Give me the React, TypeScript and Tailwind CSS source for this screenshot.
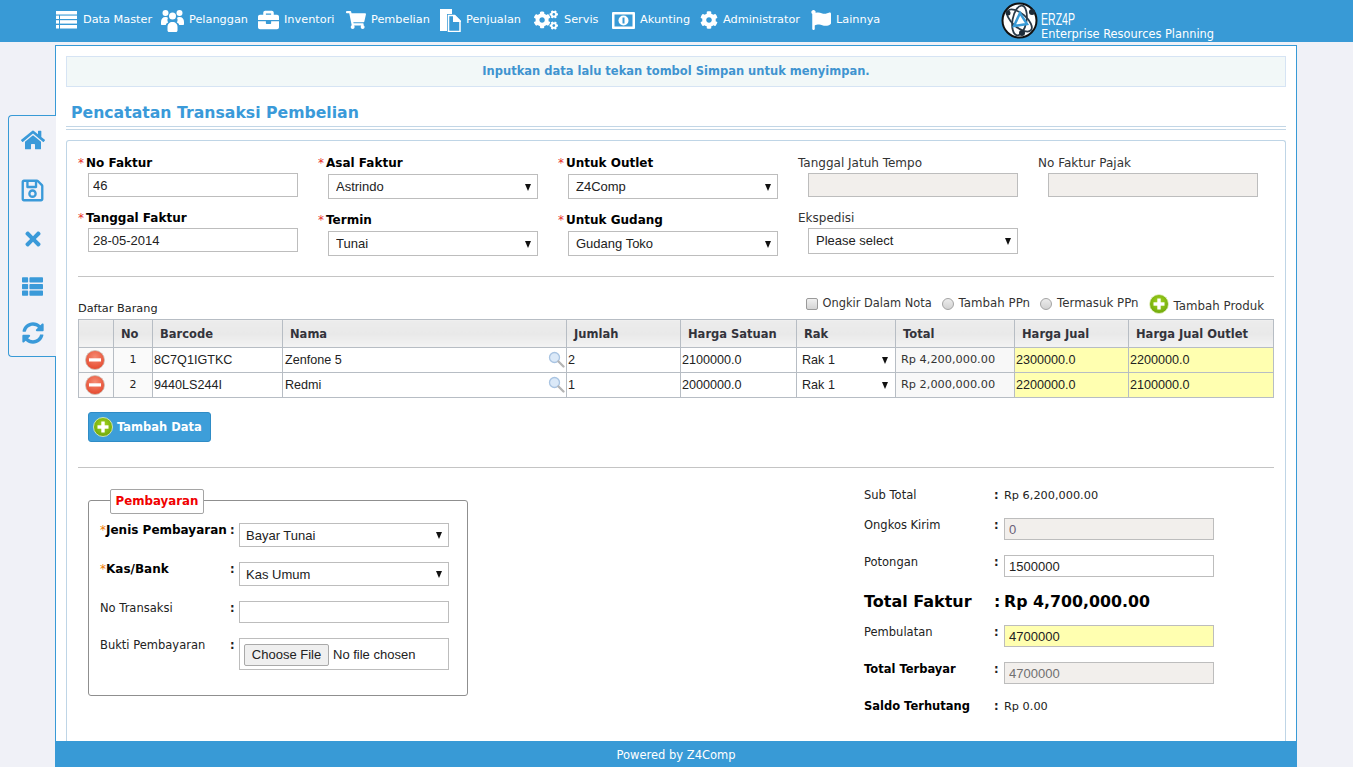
import React from "react";
import { FaThList, FaBriefcase, FaShoppingCart, FaCogs, FaCog, FaFlag, FaHome, FaRegSave, FaTimes, FaSyncAlt } from "react-icons/fa";

const sans = "font-['DejaVu_Sans',Verdana,sans-serif]";
const arial = "font-['Liberation_Sans',Arial,sans-serif]";

function Bank() {
  return (
    <svg width="23" height="17" viewBox="0 0 23 17">
      <rect x="0" y="0" width="23" height="17" rx="1" fill="#fff" />
      <rect x="2.500" y="2.500" width="18" height="12" fill="#389ad6" />
      <circle cx="11.500" cy="8.500" r="5" fill="#fff" />
      <rect x="10.500" y="5.500" width="2" height="6" fill="#389ad6" />
    </svg>
  );
}

function Stack() {
  return (
    <svg width="21" height="18" viewBox="0 0 21 18" fill="#fff">
      <rect x="0" y="0" width="21" height="3.500" />
      <rect x="0" y="4.600" width="3" height="3.400" />
      <rect x="4" y="4.600" width="17" height="3.400" />
      <rect x="0" y="9.200" width="3" height="3.400" />
      <rect x="4" y="9.200" width="17" height="3.400" />
      <rect x="0" y="14" width="3" height="3.500" />
      <rect x="4" y="14" width="17" height="3.500" />
    </svg>
  );
}

function People() {
  return (
    <svg width="23" height="23" viewBox="0 0 23 23" fill="#fff">
      <circle cx="4.500" cy="4" r="3" />
      <circle cx="18.500" cy="4" r="3" />
      <circle cx="11.500" cy="7" r="3.500" />
      <path d="M0 13c0-3 1.500-5 4.500-5 1 0 2 .3 2.500 1-.8 1.200-.8 3 .2 4.500-1.500.6-2.200 1.500-2.400 2.500H1c-.6 0-1-.4-1-1z" />
      <path d="M23 13c0-3-1.500-5-4.500-5-1 0-2 .3-2.500 1 .8 1.200.8 3-.2 4.500 1.500.6 2.200 1.500 2.400 2.500H22c.6 0 1-.4 1-1z" />
      <path d="M6.500 18c0-3 2-5 5-5s5 2 5 5v3.500c0 .8-.7 1.500-1.500 1.500H8c-.8 0-1.500-.7-1.500-1.500z" />
    </svg>
  );
}

function Docs() {
  return (
    <svg width="21" height="23" viewBox="0 0 21 23">
      <path d="M0 0h12v5H7v17H0z" fill="#fff" />
      <path d="M8.500 6.500h6l5.500 5.500v10.500H8.500z" fill="#389ad6" stroke="#fff" strokeWidth="1.500" />
      <path d="M13 6h2l6 6v1h-8z" fill="#fff" />
    </svg>
  );
}

function Logo() {
  return (
    <svg width="37" height="37" viewBox="0 0 37 37" className="shrink-0">
      <circle cx="18.500" cy="18.500" r="17" fill="#fff" stroke="#111" strokeWidth="2" />
      <g fill="none" stroke="#2b3a48" strokeWidth="1.800">
        <ellipse cx="18.500" cy="18.500" rx="15" ry="7" transform="rotate(40 18.500 18.500)" />
        <ellipse cx="18.500" cy="18.500" rx="15" ry="7" transform="rotate(100 18.500 18.500)" />
        <path d="M13 24 L19 11 L26 22 Z" stroke="#389ad6" strokeWidth="2.500" />
      </g>
      <circle cx="31" cy="10" r="3" fill="#1d2b38" />
      <circle cx="7" cy="11" r="2.500" fill="#1d2b38" />
      <circle cx="21" cy="31" r="3" fill="#1d2b38" />
    </svg>
  );
}

function Plus() {
  return (
    <svg width="20" height="20" viewBox="0 0 20 20" className="shrink-0">
      <defs>
        <radialGradient id="gp" cx="50%" cy="40%" r="60%">
          <stop offset="0" stopColor="#a5d61f" />
          <stop offset="1" stopColor="#6fa80c" />
        </radialGradient>
      </defs>
      <circle cx="10" cy="10" r="9.500" fill="url(#gp)" stroke="#e8f2c8" strokeWidth="0.800" />
      <rect x="8.300" y="4.500" width="3.400" height="11" fill="#fff" />
      <rect x="4.500" y="8.300" width="11" height="3.400" fill="#fff" />
    </svg>
  );
}

function Minus() {
  return (
    <svg width="20" height="20" viewBox="0 0 20 20">
      <defs>
        <radialGradient id="gm" cx="50%" cy="35%" r="65%">
          <stop offset="0" stopColor="#f58a72" />
          <stop offset="1" stopColor="#e5492e" />
        </radialGradient>
      </defs>
      <circle cx="10" cy="10" r="9.500" fill="url(#gm)" stroke="#c9c4bd" strokeWidth="0.800" />
      <rect x="4" y="8.300" width="12" height="3.200" fill="#fff" />
    </svg>
  );
}

function Lens() {
  return (
    <svg width="17" height="17" viewBox="0 0 17 17">
      <circle cx="6.500" cy="6.500" r="5" fill="#dbe9f8" stroke="#a9c4e2" strokeWidth="1.300" />
      <path d="M10.500 10.500 L15.500 15.500" stroke="#b4b4b4" strokeWidth="2.300" strokeLinecap="round" />
    </svg>
  );
}

function Req({ children, star = "text-[#e8331f] w-[8px]" }: { children: React.ReactNode; star?: string }) {
  return (
    <span className="text-black font-bold">
      <span className={`${star} inline-block font-normal`}>*</span>
      {children}
    </span>
  );
}

function Sel({ value, h, ml = "ml-[10px]", pl = "pl-[7px]", pt = "" }: { value: string; h: string; ml?: string; pl?: string; pt?: string }) {
  return (
    <div className={`relative w-[210px] shrink-0 ${h} ${ml}`}>
      <select
        defaultValue={value}
        className={`appearance-none w-full h-full bg-white border border-[#bdbdbd] ${pl} ${pt} ${arial} text-[13px] text-[#222] outline-none`}
      >
        <option>{value}</option>
      </select>
      <span className="absolute right-[7px] top-1/2 -translate-y-[3px] w-0 h-0 border-x-[3.500px] border-x-transparent border-t-[7px] border-t-[#111] pointer-events-none" />
    </div>
  );
}

function Inp({ value = "", h = "h-[24px]", ml = "ml-[10px]", tone = "bg-white text-[#222]" }: { value?: string; h?: string; ml?: string; tone?: string }) {
  return (
    <input
      readOnly
      value={value}
      className={`block w-[210px] shrink-0 ${h} ${ml} ${tone} pl-[4px] border border-[#bdbdbd] ${arial} text-[13px] outline-none`}
    />
  );
}

const navItems: { icon: React.ReactNode; label: string; w: string; iw: string }[] = [
  { icon: <Stack />, label: "Data Master", w: "w-[105px]", iw: "w-[21px] mr-[1px]" },
  { icon: <People />, label: "Pelanggan", w: "w-[97px]", iw: "w-[23px]" },
  { icon: <FaBriefcase size={22} />, label: "Inventori", w: "w-[88px]", iw: "w-[21px]" },
  { icon: <FaShoppingCart size={20} />, label: "Pembelian", w: "w-[94px]", iw: "w-[20px]" },
  { icon: <Docs />, label: "Penjualan", w: "w-[93px]", iw: "w-[21px]" },
  { icon: <FaCogs size={24} />, label: "Servis", w: "w-[79px]", iw: "w-[26px]" },
  { icon: <Bank />, label: "Akunting", w: "w-[88px]", iw: "w-[23px]" },
  { icon: <FaCog size={20} />, label: "Administrator", w: "w-[111px]", iw: "w-[18px]" },
  { icon: <FaFlag size={20} />, label: "Lainnya", w: "w-[80px]", iw: "w-[20px]" },
];

const th = "border border-[#b7bdc4] bg-gradient-to-b from-[#ececec] via-[#e9e9e9] to-[#f3f3f3] text-left pl-[7px] pt-[2px] font-bold text-[#33333b] text-[11.500px]";
const td = "border border-[#b7bdc4] p-0 pl-[1px] pt-[1px] text-[12.600px] text-[#222] align-middle";

function Row({ n, code, name, qty, price, total, sell, outlet }: { n: string; code: string; name: string; qty: string; price: string; total: string; sell: string; outlet: string }) {
  return (
    <tr className="h-[25px]">
      <td className="border border-[#b7bdc4] bg-[#fafafa] p-0 pl-[6px] align-middle">
        <div className="flex items-center"><Minus /></div>
      </td>
      <td className="border border-[#b7bdc4] bg-[#fafafa] p-0 pt-[1px] text-center text-[11px] text-[#222]">{n}</td>
      <td className={`${td} ${arial}`}>{code}</td>
      <td className={`${td} ${arial}`}>
        <div className="flex items-center justify-between pr-[1px] pl-[1px]">
          <span>{name}</span>
          <span className="-mt-[1px] flex"><Lens /></span>
        </div>
      </td>
      <td className={`${td} ${arial}`}>{qty}</td>
      <td className={`${td} ${arial}`}>{price}</td>
      <td className={`${td} ${arial} pl-[5px]`}>
        <div className="flex items-center justify-between pr-[7px]">
          <span>Rak 1</span>
          <span className="w-0 h-0 border-x-[3.500px] border-x-transparent border-t-[7px] border-t-[#111]" />
        </div>
      </td>
      <td className="border border-[#b7bdc4] bg-[#f8f8f8] p-0 pt-[1px] pl-[5px] text-[11.300px] text-[#333]">{total}</td>
      <td className={`${td} ${arial} bg-[#ffffb0]`}>{sell}</td>
      <td className={`${td} ${arial} bg-[#ffffb0]`}>{outlet}</td>
    </tr>
  );
}

function PayRow({ label, h, mb, children }: { label: React.ReactNode; h: string; mb: string; children: React.ReactNode }) {
  return (
    <div className={`flex items-start ${h} ${mb}`}>
      <div className="w-[130px] shrink-0 leading-[15px] text-[#222] whitespace-nowrap">{label}</div>
      <div className="w-[9px] shrink-0 leading-[15px] font-bold text-[#222]">:</div>
      {children}
    </div>
  );
}

function SumRow({ label, h, mb, bold, children }: { label: string; h: string; mb: string; bold?: boolean; children: React.ReactNode }) {
  return (
    <div className={`flex items-start ${h} ${mb}`}>
      <div className={`w-[130px] shrink-0 leading-[15px] ${bold ? "font-bold text-black" : "text-[#222]"}`}>{label}</div>
      <div className="w-[10px] shrink-0 leading-[15px] font-bold text-[#222]">:</div>
      {children}
    </div>
  );
}

const lbl = "h-[14px] leading-[16px] text-[12px]";

export default function App() {
  return (
    <div className={`relative h-[767px] w-[1353px] overflow-hidden flex flex-col bg-[#f0f1f7] ${sans} text-[11.500px]`}>
      {/* top bar */}
      <header className="h-[42px] shrink-0 bg-[#389ad6] flex items-center pl-[56px] text-white">
        {navItems.map((it) => (
          <div key={it.label} className={`flex items-center gap-[5px] ${it.w} shrink-0 -mt-[2px]`}>
            <span className={`flex items-center justify-center shrink-0 ${it.iw}`}>{it.icon}</span>
            <span className="whitespace-nowrap text-[11.300px]">{it.label}</span>
          </div>
        ))}
        <div className="flex items-start ml-[110px] h-[42px] pt-[2px]">
          <Logo />
          <div className="ml-[3px] flex flex-col">
            <span className={`${arial} text-[17px] leading-[16px] mt-[10px] font-light origin-left scale-x-[0.62] block`}>ERZ4P</span>
            <span className="text-[11.400px] leading-[13px] whitespace-nowrap">Enterprise Resources Planning</span>
          </div>
        </div>
      </header>

      {/* main */}
      <div className="ml-[55px] w-[1242px] mt-[3px] flex-1 min-h-0 flex flex-col">
        <main className="flex-1 min-h-0 flex flex-col bg-white border border-b-0 border-[#389ad6] px-[10px] pt-[10px] overflow-hidden">
          <div className="h-[31px] shrink-0 bg-[#f2f8f8] border border-[#d6e4f4] flex items-center justify-center pt-[1px] font-bold text-[11.500px] text-[#3f94d0]">
            Inputkan data lalu tekan tombol Simpan untuk menyimpan.
          </div>
          <h1 className="mt-[13px] ml-[5px] h-[24px] pt-[1px] text-[15.700px] leading-[24px] font-bold text-[#3a9ad9]">Pencatatan Transaksi Pembelian</h1>
          <div className="mt-[2px] h-[4px] shrink-0 border-y border-[#c2d6e6]" />

          {/* panel */}
          <section className="mt-[10px] flex-1 min-h-0 border border-b-0 border-[#bfd5e6] rounded-t-[3px] px-[11px] pt-[14px]">
            <div className="flex w-[1196px]">
              <div className="w-[240px] shrink-0 flex flex-col">
                <label className={`${lbl} mb-[4px]`}><Req>No Faktur</Req></label>
                <Inp value="46" />
                <label className={`${lbl} mt-[13px] mb-[4px]`}><Req>Tanggal Faktur</Req></label>
                <Inp value="28-05-2014" />
              </div>
              <div className="w-[240px] shrink-0 flex flex-col">
                <label className={`${lbl} mb-[5px]`}><Req>Asal Faktur</Req></label>
                <Sel value="Astrindo" h="h-[25px]" />
                <label className={`${lbl} mt-[13px] mb-[5px]`}><Req>Termin</Req></label>
                <Sel value="Tunai" h="h-[25px]" />
              </div>
              <div className="w-[240px] shrink-0 flex flex-col">
                <label className={`${lbl} mb-[5px]`}><Req>Untuk Outlet</Req></label>
                <Sel value="Z4Comp" h="h-[25px]" />
                <label className={`${lbl} mt-[13px] mb-[5px]`}><Req>Untuk Gudang</Req></label>
                <Sel value="Gudang Toko" h="h-[25px]" />
              </div>
              <div className="w-[240px] shrink-0 flex flex-col text-[#333]">
                <label className={`${lbl} mb-[4px]`}>Tanggal Jatuh Tempo</label>
                <Inp tone="bg-[#f2efec]" />
                <label className={`${lbl} mt-[13px] mb-[4px]`}>Ekspedisi</label>
                <Sel value="Please select" h="h-[26px]" />
              </div>
              <div className="w-[236px] shrink-0 flex flex-col text-[#333]">
                <label className={`${lbl} mb-[4px]`}>No Faktur Pajak</label>
                <Inp tone="bg-[#f2efec]" />
              </div>
            </div>

            <hr className="mt-[20px] border-t border-[#c4c4c4]" />

            <div className="mt-[20px] h-[22px] flex items-end justify-between pb-[3px]">
              <span className="text-[#222] leading-[14px] text-[11.300px]">Daftar Barang</span>
              <div className="flex items-center pr-[10px] text-[#333] text-[11.800px]">
                <span className="w-[12px] h-[12px] rounded-[2px] border border-[#9a9a9a] bg-gradient-to-b from-[#f0f0f0] to-[#d4d4d4]" />
                <span className="ml-[5px] text-[11.400px]">Ongkir Dalam Nota</span>
                <span className="ml-[10px] w-[12px] h-[12px] rounded-full border border-[#a3a3a3] bg-gradient-to-b from-[#ececec] to-[#d2d2d2]" />
                <span className="ml-[5px]">Tambah PPn</span>
                <span className="ml-[10px] w-[12px] h-[12px] rounded-full border border-[#a3a3a3] bg-gradient-to-b from-[#ececec] to-[#d2d2d2]" />
                <span className="ml-[5px]">Termasuk PPn</span>
                <span className="ml-[10px] mt-[1px]"><Plus /></span>
                <span className="ml-[5px] mt-[7px]">Tambah Produk</span>
              </div>
            </div>

            <table className="w-[1195px] table-fixed border-collapse">
              <colgroup>
                <col className="w-[35px]" />
                <col className="w-[39px]" />
                <col className="w-[130px]" />
                <col className="w-[284px]" />
                <col className="w-[114px]" />
                <col className="w-[116px]" />
                <col className="w-[99px]" />
                <col className="w-[119px]" />
                <col className="w-[114px]" />
                <col className="w-[145px]" />
              </colgroup>
              <thead>
                <tr className="h-[28px]">
                  <th className={th}></th>
                  <th className={th}>No</th>
                  <th className={th}>Barcode</th>
                  <th className={th}>Nama</th>
                  <th className={th}>Jumlah</th>
                  <th className={th}>Harga Satuan</th>
                  <th className={th}>Rak</th>
                  <th className={th}>Total</th>
                  <th className={th}>Harga Jual</th>
                  <th className={th}>Harga Jual Outlet</th>
                </tr>
              </thead>
              <tbody>
                <Row n="1" code="8C7Q1IGTKC" name="Zenfone 5" qty="2" price="2100000.0" total="Rp 4,200,000.00" sell="2300000.0" outlet="2200000.0" />
                <Row n="2" code="9440LS244I" name="Redmi" qty="1" price="2000000.0" total="Rp 2,000,000.00" sell="2200000.0" outlet="2100000.0" />
              </tbody>
            </table>

            <button className="mt-[14px] ml-[10px] w-[123px] h-[30px] rounded-[3px] bg-[#3d9ed9] border border-[#2f8cc6] flex items-center pl-[4px] gap-[4px] text-white font-bold text-[11.500px]">
              <Plus />
              <span className="mt-[1px]">Tambah Data</span>
            </button>

            <hr className="mt-[25px] border-t border-[#c4c4c4]" />

            <div className="mt-[20px] flex items-start">
              {/* payment */}
              <div className="relative mt-[12px] ml-[10px] w-[380px] h-[196px] shrink-0 border border-[#8f8f8f] rounded-[3px] pl-[11px] pt-[22px]">
                <div className="absolute left-[21px] -top-[12px] w-[94px] h-[25px] bg-white border border-[#a5a5a5] rounded-[2px] flex items-center justify-center font-bold text-[#f00000] text-[11.800px]">
                  Pembayaran
                </div>
                <PayRow label={<span className="text-[12px]"><Req star="text-[#f07a00] w-[6px]">Jenis Pembayaran</Req></span>} h="h-[24px]" mb="mb-[15px]">
                  <Sel value="Bayar Tunai" h="h-[24px]" ml="ml-0" pl="pl-[6px]" pt="pt-[2px]" />
                </PayRow>
                <PayRow label={<span className="text-[12px]"><Req star="text-[#f07a00] w-[6px]">Kas/Bank</Req></span>} h="h-[24px]" mb="mb-[15px]">
                  <Sel value="Kas Umum" h="h-[24px]" ml="ml-0" pl="pl-[6px]" pt="pt-[2px]" />
                </PayRow>
                <PayRow label="No Transaksi" h="h-[22px]" mb="mb-[15px]">
                  <Inp h="h-[22px]" ml="ml-0" />
                </PayRow>
                <PayRow label="Bukti Pembayaran" h="h-[32px]" mb="mb-0">
                  <div className="w-[210px] h-[32px] shrink-0 border border-[#bdbdbd] flex items-center pl-[4px] pt-[1px]">
                    <input
                      type="file"
                      className={`w-[200px] ${arial} text-[13px] text-[#222] file:w-[85px] file:h-[22px] file:mr-[4px] file:bg-[#efefef] file:border file:border-[#a9a9a9] file:rounded-[2px] file:text-[#222] file:text-[13px]`}
                    />
                  </div>
                </PayRow>
              </div>

              {/* summary */}
              <div className="ml-[396px] w-[350px]">
                <SumRow label="Sub Total" h="h-[14px]" mb="mb-[16px]">
                  <span className="leading-[15px] text-[#222] text-[11.300px]">Rp 6,200,000.00</span>
                </SumRow>
                <SumRow label="Ongkos Kirim" h="h-[22px]" mb="mb-[15px]">
                  <Inp value="0" h="h-[22px]" ml="ml-0" tone="bg-[#f2efec] text-[#6a5f78]" />
                </SumRow>
                <SumRow label="Potongan" h="h-[22px]" mb="mb-[13px]">
                  <Inp value="1500000" h="h-[22px]" ml="ml-0" />
                </SumRow>
                <div className="flex items-center h-[22px] mb-[13px] pt-[2px] font-bold text-[15.800px] text-black">
                  <span className="w-[130px] text-[16px]">Total Faktur</span>
                  <span className="w-[10px]">:</span>
                  <span>Rp 4,700,000.00</span>
                </div>
                <SumRow label="Pembulatan" h="h-[22px]" mb="mb-[15px]">
                  <Inp value="4700000" h="h-[22px]" ml="ml-0" tone="bg-[#ffffb0] text-[#222]" />
                </SumRow>
                <SumRow label="Total Terbayar" h="h-[22px]" mb="mb-[15px]" bold>
                  <Inp value="4700000" h="h-[22px]" ml="ml-0" tone="bg-[#f2efec] text-[#707070]" />
                </SumRow>
                <SumRow label="Saldo Terhutang" h="h-[14px]" mb="mb-0" bold>
                  <span className="leading-[15px] text-[#222] font-normal text-[11.300px]">Rp 0.00</span>
                </SumRow>
              </div>
            </div>
          </section>
        </main>
        <footer className="h-[26px] shrink-0 bg-[#389ad6] flex items-center justify-center pt-[3px] text-white text-[11.500px]">
          Powered by Z4Comp
        </footer>
      </div>

      {/* floating tool rail */}
      <aside className="absolute left-[8px] top-[115px] w-[48px] h-[242px] bg-[#f0f1f7] border border-r-0 border-[#389ad6] rounded-l-[4px] flex flex-col items-center justify-between py-[12px] text-[#3a9ad9]">
        <FaHome size={24} />
        <FaRegSave size={25} />
        <FaTimes size={22} />
        <FaThList size={21} />
        <FaSyncAlt size={22} />
      </aside>
    </div>
  );
}
